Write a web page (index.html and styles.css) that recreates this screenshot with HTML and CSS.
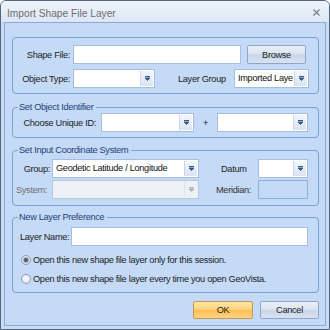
FILE: index.html
```html
<!DOCTYPE html>
<html>
<head>
<meta charset="utf-8">
<link rel="stylesheet" href="styles.css">
</head>
<body>
<div class="window">
  <div class="titlebar">
    <span class="title">Import Shape File Layer</span>
    <svg class="close" width="7" height="7" viewBox="0 0 7 7"><path d="M0.5 0.5L6.5 6.5M6.5 0.5L0.5 6.5" stroke="#7a7a7a" stroke-width="1.1"/></svg>
  </div>
  <div class="frame">
    <div class="client">
      <div class="group g1">
        <div class="row">
          <span class="lbl l-shape">Shape File:</span>
          <span class="input in-shape"></span>
          <span class="btn browse">Browse</span>
        </div>
        <div class="row">
          <span class="lbl l-shape">Object Type:</span>
          <span class="select sel-type"><span class="val"></span><span class="dd"><svg width="5" height="5" viewBox="0 0 5 5"><path d="M0 0.5H5M0 2H5L2.5 4.5Z" stroke="#3a5a8a" stroke-width="1" fill="#3a5a8a"/></svg></span></span>
          <span class="lbl l-group">Layer Group</span>
          <span class="select sel-group"><span class="val">Imported Laye</span><span class="dd"><svg width="5" height="5" viewBox="0 0 5 5"><path d="M0 0.5H5M0 2H5L2.5 4.5Z" stroke="#3a5a8a" stroke-width="1" fill="#3a5a8a"/></svg></span></span>
        </div>
      </div>

      <div class="group g2">
        <span class="legend">Set Object Identifier</span>
        <div class="row">
          <span class="lbl l-unique">Choose Unique ID:</span>
          <span class="select sel-id1"><span class="val"></span><span class="dd"><svg width="5" height="5" viewBox="0 0 5 5"><path d="M0 0.5H5M0 2H5L2.5 4.5Z" stroke="#3a5a8a" stroke-width="1" fill="#3a5a8a"/></svg></span></span>
          <span class="plus">+</span>
          <span class="select sel-id2"><span class="val"></span><span class="dd"><svg width="5" height="5" viewBox="0 0 5 5"><path d="M0 0.5H5M0 2H5L2.5 4.5Z" stroke="#3a5a8a" stroke-width="1" fill="#3a5a8a"/></svg></span></span>
        </div>
      </div>

      <div class="group g3">
        <span class="legend">Set Input Coordinate System</span>
        <div class="row">
          <span class="lbl l-grp">Group:</span>
          <span class="select sel-geo"><span class="val">Geodetic Latitude / Longitude</span><span class="dd"><svg width="5" height="5" viewBox="0 0 5 5"><path d="M0 0.5H5M0 2H5L2.5 4.5Z" stroke="#3a5a8a" stroke-width="1" fill="#3a5a8a"/></svg></span></span>
          <span class="lbl l-datum">Datum</span>
          <span class="select sel-datum"><span class="val"></span><span class="dd"><svg width="5" height="5" viewBox="0 0 5 5"><path d="M0 0.5H5M0 2H5L2.5 4.5Z" stroke="#3a5a8a" stroke-width="1" fill="#3a5a8a"/></svg></span></span>
        </div>
        <div class="row">
          <span class="lbl l-sys">System:</span>
          <span class="select sel-geo disabled"><span class="val"></span><span class="dd"><svg width="5" height="5" viewBox="0 0 5 5"><path d="M0 0.5H5M0 2H5L2.5 4.5Z" stroke="#a9b4c4" stroke-width="1" fill="#a9b4c4"/></svg></span></span>
          <span class="lbl l-mer">Meridian:</span>
          <span class="input in-mer"></span>
        </div>
      </div>

      <div class="group g4">
        <span class="legend">New Layer Preference</span>
        <div class="row">
          <span class="lbl l-name">Layer Name:</span>
          <span class="input in-name"></span>
        </div>
        <div class="row radio-row first">
          <span class="radio checked"></span>
          <span class="rtext">Open this new shape file layer only for this session.</span>
        </div>
        <div class="row radio-row">
          <span class="radio"></span>
          <span class="rtext">Open this new shape file layer every time you open GeoVista.</span>
        </div>
      </div>

      <div class="buttons">
        <span class="btn ok">OK</span>
        <span class="btn cancel">Cancel</span>
      </div>
    </div>
  </div>
</div>
</body>
</html>
```
FILE: styles.css
```css
* { box-sizing: border-box; }
body {
  margin: 0;
  font-family: "Liberation Sans", Arial, sans-serif;
  font-size: 9.2px;
  letter-spacing: -0.3px;
  color: #1c1c1c;
}
.window {
  width: 330px;
  height: 330px;
  border: 1px solid #52667f;
  border-radius: 6px 6px 0 0;
  background: #c9dcf4;
  display: flex;
  flex-direction: column;
  overflow: hidden;
}
.titlebar {
  height: 21px;
  flex: none;
  display: flex;
  align-items: center;
  justify-content: space-between;
  padding: 4px 9px 0 6px;
  background: linear-gradient(#f0f4fb, #dbe6f5);
  color: #6e6e6e;
}
.title { font-size: 10.2px; letter-spacing: 0; }
.close { margin-top: -2px; }
.frame {
  flex: 1;
  padding: 0 3px 3px;
  display: flex;
}
.client {
  flex: 1;
  border: 1px solid #8eaad2;
  background: #c4daf6;
  padding: 14px 6px 0 7px;
  display: flex;
  flex-direction: column;
}
.group {
  position: relative;
  border: 1px solid #7f9fcd;
  border-radius: 4px;
  display: flex;
  flex-direction: column;
}
.legend {
  position: absolute;
  top: -7px;
  left: 5px;
  padding: 0 3px 0 1px;
  background: #c4daf6;
  color: #1f3f78;
  line-height: 13px;
  white-space: nowrap;
}
.row {
  display: flex;
  align-items: center;
  height: 19px;
  flex: none;
}
.lbl { flex: none; white-space: nowrap; }
.input {
  height: 19px;
  border: 1px solid #a3bde3;
  background: #fff;
  flex: none;
}
.select {
  height: 19px;
  border: 1px solid #a3bde3;
  background: #fff;
  display: flex;
  flex: none;
}
.select .val {
  flex: 1;
  padding-left: 3px;
  line-height: 17px;
  overflow: hidden;
  white-space: nowrap;
  color: #111;
}
.select .dd {
  width: 13px;
  margin: 1px;
  background: linear-gradient(#f3f6fb, #dae4f2);
  border-left: 1px solid #c9d7eb;
  display: flex;
  align-items: center;
  justify-content: center;
}
.select.disabled {
  background: #eef1f6;
  border-color: #b9c7da;
}
.select.disabled .dd {
  background: #edf0f5;
  border-left-color: #dde3ec;
}
.btn {
  display: flex;
  align-items: center;
  justify-content: center;
  height: 19px;
  border: 1px solid #8ea6c8;
  border-radius: 2px;
  background: linear-gradient(#eaf0f8, #d9e3f0 48%, #c9d6e8 52%, #d8e2f0);
  color: #1c1c1c;
  flex: none;
}

/* group 1 */
.g1 { padding: 7px 0 5px; gap: 5px; }
.l-shape { width: 57px; text-align: right; margin-right: 3px; }
.in-shape { width: 168px; }
.browse { width: 59px; margin-left: 6px; }
.sel-type { width: 82px; }
.l-group { width: 56px; margin-left: 23px; }
.sel-group { width: 75px; }

/* group 2 */
.g2 { margin-top: 13px; padding: 5px 0; }
.l-unique { width: 83px; text-align: right; margin-right: 5px; }
.sel-id1 { width: 93px; }
.plus { width: 23px; text-align: center; flex: none; }
.sel-id2 { width: 91px; }

/* group 3 */
.g3 { margin-top: 12px; padding: 8px 0 6px; gap: 2px; }
.l-grp { width: 39px; text-align: right; padding-right: 2px; }
.sel-geo { width: 147px; }
.l-datum { width: 59px; padding-left: 22px; }
.sel-datum { width: 50px; }
.l-sys { width: 39px; padding-left: 3px; color: #707070; }
.l-mer { width: 59px; padding-left: 17px; color: #333; }
.in-mer { width: 50px; background: transparent; border-color: #8fb0dc; }

/* group 4 */
.g4 { margin-top: 11px; padding: 9px 0 4px; }
.l-name { width: 58px; padding-left: 7px; }
.in-name { width: 237px; }
.radio-row { padding-left: 8px; }
.radio-row.first { margin-top: 4px; }
.rtext { white-space: nowrap; }
.radio {
  width: 10px;
  height: 10px;
  border-radius: 50%;
  border: 1px solid #8d9fb8;
  background: radial-gradient(circle at 50% 40%, #ffffff, #d6dde8);
  margin-right: 2px;
  flex: none;
  display: flex;
  align-items: center;
  justify-content: center;
}
.radio.checked::after {
  content: "";
  width: 4px;
  height: 4px;
  border-radius: 50%;
  background: #4a5a70;
  box-shadow: 0 0 1px 1px #9aa8bb;
}

/* buttons */
.buttons {
  margin-top: 8px;
  display: flex;
  justify-content: flex-end;
  gap: 7px;
}
.buttons .btn { height: 18px; }
.ok {
  width: 60px;
  border-color: #c49a50;
  background: linear-gradient(#ffe6a4, #ffd47e 45%, #ffbf52 52%, #ffd486);
}
.cancel { width: 59px; }
```
